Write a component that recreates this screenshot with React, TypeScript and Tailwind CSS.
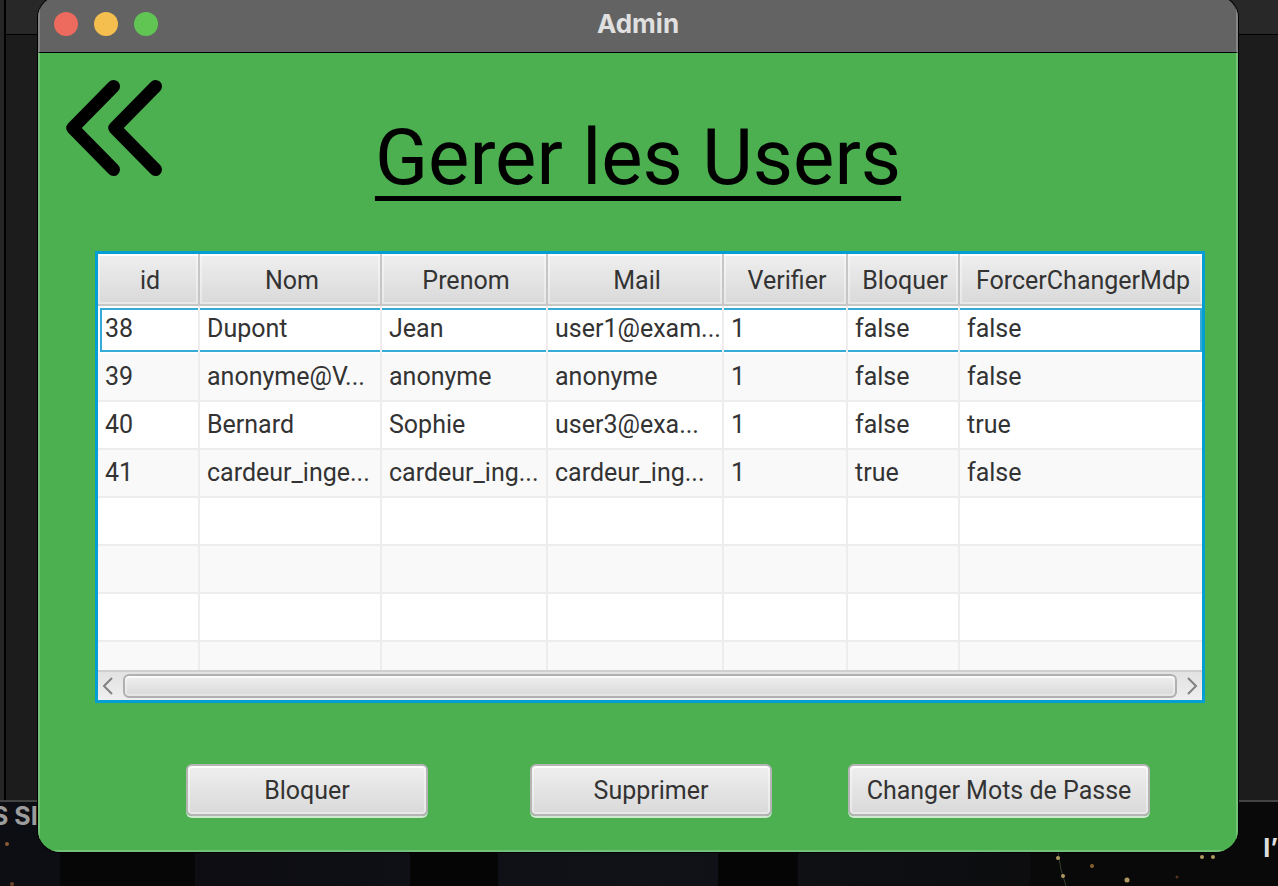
import { useState } from "react";

type User = {
  id: string;
  nom: string;
  prenom: string;
  mail: string;
  verifier: string;
  bloquer: string;
  forcer: string;
};

const users: User[] = [
  { id: "38", nom: "Dupont", prenom: "Jean", mail: "user1@exam...", verifier: "1", bloquer: "false", forcer: "false" },
  { id: "39", nom: "anonyme@V...", prenom: "anonyme", mail: "anonyme", verifier: "1", bloquer: "false", forcer: "false" },
  { id: "40", nom: "Bernard", prenom: "Sophie", mail: "user3@exa...", verifier: "1", bloquer: "false", forcer: "true" },
  { id: "41", nom: "cardeur_inge...", prenom: "cardeur_ing...", mail: "cardeur_ing...", verifier: "1", bloquer: "true", forcer: "false" },
];

const columns: { key: keyof User; label: string; width: string }[] = [
  { key: "id", label: "id", width: "w-[102px]" },
  { key: "nom", label: "Nom", width: "w-[182px]" },
  { key: "prenom", label: "Prenom", width: "w-[166px]" },
  { key: "mail", label: "Mail", width: "w-[176px]" },
  { key: "verifier", label: "Verifier", width: "w-[124px]" },
  { key: "bloquer", label: "Bloquer", width: "w-[112px]" },
  { key: "forcer", label: "ForcerChangerMdp", width: "" },
];

const emptyRows = ["h-12", "h-12", "h-12", "h-7"];

function Desktop() {
  return (
    <div className="absolute inset-0 flex flex-col overflow-hidden bg-[#08080b]">
      <div className="flex h-[802px] shrink-0 border-b-2 border-[#444444] bg-[#232323]">
        <div className="w-1 bg-[#262626]" />
        <div className="flex grow flex-col border-l-2 border-black">
          <div className="h-[35px] border-b border-black bg-[#282828]" />
          <div className="grow bg-[#1c1c1c]" />
        </div>
      </div>
      <div className="relative grow bg-linear-to-r from-[#0b0b10] via-[#111218] to-[#0a0a0a]">
        <svg className="absolute inset-0 h-full w-full" aria-hidden="true">
          <rect x="0" y="0" width="60" height="84" fill="#0d0d14" />
          <rect x="60" y="50" width="135" height="34" fill="#060607" />
          <rect x="410" y="50" width="88" height="34" fill="#050505" />
          <rect x="718" y="50" width="80" height="34" fill="#050505" />
          <rect x="1030" y="0" width="248" height="84" fill="#090909" />
          <path d="M1058 50q2 18 8 34" stroke="#34402a" fill="none" />
          <g fill="#b09a62">
            <circle cx="7" cy="42" r="2" fill="#8a5a34" />
            <circle cx="12" cy="82" r="2" fill="#6a4428" />
            <circle cx="1058" cy="56" r="2" />
            <circle cx="1063" cy="74" r="2" />
            <circle cx="1092" cy="64" r="2" fill="#86602e" />
            <circle cx="1127" cy="78" r="2.5" />
            <circle cx="1177" cy="75" r="1.5" fill="#553322" />
            <circle cx="1202" cy="55" r="2" />
            <circle cx="1213" cy="55" r="2" />
          </g>
        </svg>
        <div className="relative flex justify-between font-['Inter',sans-serif] text-[25px] leading-7 font-bold">
          <span className="-ml-2 text-[#9c9c9c]">S SI</span>
          <span className="pt-8 text-[#dedede]">I’</span>
        </div>
      </div>
    </div>
  );
}

function ActionButton({ label, width }: { label: string; width: string }) {
  return (
    <button
      type="button"
      className={`${width} h-[52px] rounded-md border-2 border-[#b5b5b5] bg-linear-to-b from-[#efefef] to-[#d9d9d9] pt-0.5 leading-[46px] whitespace-nowrap shadow-[0_2px_0_#d0ead1,inset_0_2px_0_#fdfdfd,inset_0_0_0_2px_rgba(255,255,255,0.4)]`}
    >
      {label}
    </button>
  );
}

function ScrollArrow({ label, d, align }: { label: string; d: string; align: string }) {
  return (
    <button type="button" aria-label={label} className={`flex w-[25px] shrink-0 items-center px-1 ${align}`}>
      <svg width="11" height="18" viewBox="0 0 11 18" fill="none" stroke="#808080" strokeWidth="2">
        <path d={d} />
      </svg>
    </button>
  );
}

function UsersTable({ selected, onSelect }: { selected: string; onSelect: (id: string) => void }) {
  return (
    <div className="overflow-hidden border-3 border-[#039ed3] bg-white">
      <table className="w-full table-fixed border-separate border-spacing-0">
        <thead>
          <tr className="h-[52px]">
            {columns.map((c) => (
              <th
                key={c.key}
                scope="col"
                className={`${c.width} border-r-2 border-b-2 border-[#c6c6c6] bg-linear-to-b from-[#efefef] to-[#d9d9d9] p-0 pt-[3px] pl-1 text-center font-normal whitespace-nowrap shadow-[inset_0_2px_0_#ffffff,inset_0_0_0_2px_rgba(255,255,255,0.4)] last:border-r-0`}
              >
                {c.label}
              </th>
            ))}
          </tr>
        </thead>
        <tbody>
          {users.map((u, i) => {
            const focused = u.id === selected;
            return (
              <tr key={u.id} onClick={() => onSelect(u.id)} className={i % 2 ? "bg-[#f9f9f9]" : "bg-white"}>
                {columns.map((c, j) => (
                  <td
                    key={c.key}
                    className={`h-12 border-r-2 border-[#ededed] p-0 whitespace-nowrap last:border-r-0 ${focused ? "" : "border-b-2"}`}
                  >
                    {focused ? (
                      <div
                        className={`h-11 border-y-2 border-[#36abd8] leading-[38px] ${j === 0 ? "ml-0.5 border-l-2 pl-[3px]" : "pl-[7px]"} ${j === columns.length - 1 ? "border-r-2" : ""}`}
                      >
                        {u[c.key]}
                      </div>
                    ) : (
                      <div className="pl-[7px] leading-[38px]">{u[c.key]}</div>
                    )}
                  </td>
                ))}
              </tr>
            );
          })}
          {emptyRows.map((h, i) => (
            <tr key={i} className={i % 2 ? "bg-[#f9f9f9]" : "bg-white"}>
              {columns.map((c) => (
                <td
                  key={c.key}
                  className={`${h} border-r-2 border-[#ededed] p-0 last:border-r-0 ${h === "h-7" ? "" : "border-b-2"}`}
                />
              ))}
            </tr>
          ))}
        </tbody>
      </table>
      <div className="flex h-[30px] border-t-2 border-[#cfcfcf] bg-linear-to-b from-[#e2e2e2] to-[#efefef]">
        <ScrollArrow label="Défiler à gauche" d="M10 1 2 9l8 8" align="justify-start" />
        <div className="my-0.5 grow rounded-md border-2 border-[#b0b0b0] bg-linear-to-b from-[#efefef] to-[#d9d9d9] shadow-[inset_0_2px_0_#fafafa,inset_0_0_0_2px_rgba(255,255,255,0.3)]" />
        <ScrollArrow label="Défiler à droite" d="m1 1 8 8-8 8" align="justify-end" />
      </div>
    </div>
  );
}

export default function App() {
  const [selected, setSelected] = useState("38");

  return (
    <div className="relative min-h-screen overflow-hidden font-['Roboto',sans-serif] text-[25px] text-[#333333]">
      <Desktop />
      <div className="relative -mt-1 mr-10 ml-[38px] overflow-hidden rounded-[22px] shadow-[0_0_0_1px_#000000]">
        <header className="grid h-[57px] grid-cols-[1fr_auto_1fr] items-center border-x-2 border-b border-x-[#858585] border-b-black bg-[#636363] px-3.5">
          <div className="flex gap-4">
            <button type="button" aria-label="Fermer" className="size-6 rounded-full bg-[#ed6a5e]" />
            <button type="button" aria-label="Réduire" className="size-6 rounded-full bg-[#f5bf4f]" />
            <button type="button" aria-label="Agrandir" className="size-6 rounded-full bg-[#61c554]" />
          </div>
          <span className="font-['Inter',sans-serif] text-[26px] leading-8 font-bold text-[#e0e0e0]">Admin</span>
        </header>
        <main className="border-x-2 border-b-2 border-[#73c277] bg-[#4caf50] pb-[34px]">
          <div className="grid grid-cols-[1fr_auto_1fr] items-start px-[26px] pt-[27px]">
            <button type="button" aria-label="Retour" className="size-24">
              <svg
                viewBox="0 0 96 96"
                fill="none"
                stroke="#000000"
                strokeWidth="13"
                strokeLinecap="round"
                strokeLinejoin="round"
              >
                <path d="M47.5 6.5 6.7 48l40.8 41.5M89.5 6.5 48.7 48l40.8 41.5" />
              </svg>
            </button>
            <h1 className="pt-[30px] text-[78px] leading-24 text-black underline decoration-[5px] underline-offset-[12px] [text-decoration-skip-ink:none]">
              Gerer les Users
            </h1>
          </div>
          <div className="mt-[45px] mr-[31px] ml-[55px]">
            <UsersTable selected={selected} onSelect={setSelected} />
          </div>
          <div className="mt-[61px] flex pl-[146px]">
            <ActionButton label="Bloquer" width="w-[242px]" />
            <div className="flex pl-[102px]">
              <ActionButton label="Supprimer" width="w-[242px]" />
            </div>
            <div className="flex pl-[76px]">
              <ActionButton label="Changer Mots de Passe" width="w-[302px]" />
            </div>
          </div>
        </main>
      </div>
    </div>
  );
}
